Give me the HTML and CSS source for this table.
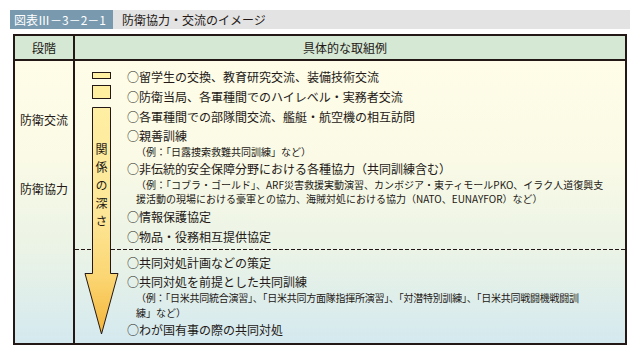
FILE: index.html
```html
<!DOCTYPE html>
<html lang="ja">
<head>
<meta charset="utf-8">
<title>防衛協力・交流のイメージ</title>
<link rel="stylesheet" href="styles.css">
</head>
<body>
<div class="page">
  <div class="title">
    <span class="title-label">図表Ⅲ－3－2－1</span>
    <span class="title-name">防衛協力・交流のイメージ</span>
  </div>
  <div class="fig">
    <div class="row head">
      <div class="c1">段階</div>
      <div class="c2">具体的な取組例</div>
    </div>
    <div class="row body">
      <div class="c1 stages">
        <div>防衛交流</div>
        <div>防衛協力</div>
      </div>
      <div class="c2 measures">
        <div class="sect upper">
          <div class="item"><div class="main">○留学生の交換、教育研究交流、装備技術交流</div></div>
          <div class="item"><div class="main">○防衛当局、各軍種間でのハイレベル・実務者交流</div></div>
          <div class="item"><div class="main">○各軍種間での部隊間交流、艦艇・航空機の相互訪問</div></div>
          <div class="item has-sub">
            <div class="main">○親善訓練</div>
            <div class="sub">（例：「日露捜索救難共同訓練」など）</div>
          </div>
          <div class="item has-sub">
            <div class="main">○非伝統的安全保障分野における各種協力（共同訓練含む）</div>
            <div class="sub">（例：「コブラ・ゴールド」、ARF災害救援実動演習、カンボジア・東ティモールPKO、イラク人道復興支</div>
            <div class="sub">援活動の現場における豪軍との協力、海賊対処における協力（NATO、EUNAYFOR）など）</div>
          </div>
          <div class="item"><div class="main">○情報保護協定</div></div>
          <div class="item"><div class="main">○物品・役務相互提供協定</div></div>
        </div>
        <div class="sect lower">
          <div class="item"><div class="main">○共同対処計画などの策定</div></div>
          <div class="item has-sub">
            <div class="main">○共同対処を前提とした共同訓練</div>
            <div class="sub tight">（例：「日米共同統合演習」、「日米共同方面隊指揮所演習」、「対潜特別訓練」、「日米共同戦闘機戦闘訓</div>
            <div class="sub">練」など）</div>
          </div>
          <div class="item"><div class="main">○わが国有事の際の共同対処</div></div>
        </div>
        <svg class="arrow" width="36" height="266" viewBox="0 0 36 266" aria-hidden="true">
          <defs>
            <linearGradient id="ag" x1="0" y1="0" x2="0" y2="264" gradientUnits="userSpaceOnUse">
              <stop offset="0" stop-color="#fff2a8"/>
              <stop offset="0.55" stop-color="#fde696"/>
              <stop offset="0.78" stop-color="#fbd673"/>
              <stop offset="1" stop-color="#f4b437"/>
            </linearGradient>
          </defs>
          <rect x="8.5" y="1.5" width="18" height="6" fill="#fff0a2" stroke="#231815" stroke-width="1"/>
          <rect x="8.5" y="14.5" width="18" height="13" fill="#ffef9f" stroke="#231815" stroke-width="1"/>
          <path d="M8.5 36.5 H26.5 V202.5 H34 L17.5 263 L1 202.5 H8.5 Z" fill="url(#ag)" stroke="#231815" stroke-width="1" stroke-linejoin="miter"/>
        </svg>
        <div class="depth">関係の深さ</div>
      </div>
    </div>
  </div>
</div>
</body>
</html>
```
FILE: styles.css
```css
html, body {
  margin: 0;
  padding: 0;
  background: #ffffff;
}

body {
  font-family: "Noto Sans CJK JP", "Noto Sans", sans-serif;
  color: #231815;
}

.page {
  padding: 10px 0 0 10px;
}

.title {
  display: flex;
  align-items: center;
  width: 620px;
  height: 19px;
  background: #e3e3e3;
}

.title-label {
  box-sizing: border-box;
  width: 103px;
  height: 19px;
  padding-left: 4px;
  background: #7899ae;
  color: #ffffff;
  font-size: 12px;
  line-height: 19px;
  white-space: nowrap;
}

.title-name {
  margin-left: 9px;
  font-size: 12px;
  line-height: 19px;
  white-space: nowrap;
}

.fig {
  box-sizing: border-box;
  width: 614px;
  margin: 5px 0 0 3px;
  border: 2px solid #231815;
}

.row {
  display: flex;
}

.head {
  height: 23px;
  background: #d5e8d4;
  border-bottom: 2px solid #231815;
  font-size: 12px;
  line-height: 23px;
}

.c1 {
  flex: 0 0 58px;
  border-right: 2px solid #231815;
  text-align: center;
}

.c2 {
  flex: 1;
}

.head .c2 {
  text-align: center;
  padding-right: 10px;
}

.body {
  height: 282px;
  background: linear-gradient(to bottom, #fffde8 0%, #fafae6 35%, #eaf3e6 68%, #d4e9ef 100%);
}

.stages {
  display: flex;
  flex-direction: column;
  gap: 49px;
  padding-top: 49px;
  font-size: 12px;
  line-height: 20px;
}

.measures {
  position: relative;
}

.sect {
  padding-left: 52px;
}

.upper {
  padding-top: 6px;
  padding-bottom: 3.5px;
  background-image: repeating-linear-gradient(90deg, #231815 0 4px, transparent 4px 6px);
  background-size: 100% 1px;
  background-position: left bottom;
  background-repeat: no-repeat;
}

.lower {
  padding-top: 3px;
}

.item {
  white-space: nowrap;
}

.main {
  font-size: 12px;
  line-height: 20px;
}

.has-sub .main {
  line-height: 18px;
}

.sub {
  padding-left: 9px;
  font-size: 10px;
  line-height: 14.5px;
}

.sub.tight {
  letter-spacing: -0.25px;
}

.arrow {
  position: absolute;
  left: 9px;
  top: 10px;
  display: block;
}

.depth {
  position: absolute;
  left: 20px;
  top: 82px;
  writing-mode: vertical-rl;
  font-size: 12px;
  line-height: 12px;
  letter-spacing: 6px;
}
```
